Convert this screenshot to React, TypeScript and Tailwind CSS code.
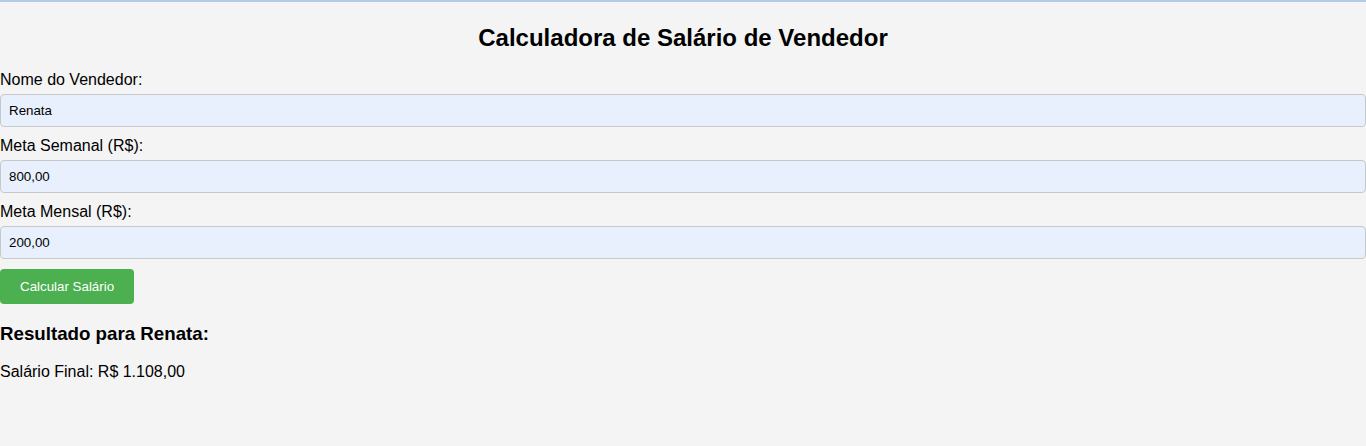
import { useState } from "react";

const font = { fontFamily: '"Liberation Sans", Arial, sans-serif' };

function Field({ id, label, value }: { id: string; label: string; value: string }) {
  return (
    <>
      <label htmlFor={id} className="mb-[5px] block text-[16px] leading-[18px] text-black">
        {label}
      </label>
      <input
        id={id}
        defaultValue={value}
        className="mb-[10px] block h-[33px] w-full rounded-[4px] border border-[#c8c8c8] bg-[#e8f0fe] px-[8px] text-[13.33px] text-black outline-none"
      />
    </>
  );
}

export default function App() {
  const [nome] = useState("Renata");

  return (
    <div className="min-h-[446px] bg-[#f4f4f4]" style={font}>
      <div className="h-[2px] bg-[#b5c9ea]" />
      <div className="pt-[22px]">
        <h2 className="mb-[20px] text-center text-[24px] font-bold leading-[27px] text-black">
          Calculadora de Salário de Vendedor
        </h2>
        <form onSubmit={(e) => e.preventDefault()}>
          <Field id="nome" label="Nome do Vendedor:" value={nome} />
          <Field id="semanal" label="Meta Semanal (R$):" value="800,00" />
          <Field id="mensal" label="Meta Mensal (R$):" value="200,00" />
          <button
            type="submit"
            className="h-[35px] rounded-[4px] bg-[#4caf50] px-[20px] text-[13.33px] font-medium text-white"
          >
            Calcular Salário
          </button>
        </form>
        <h3 className="mt-[19px] text-[18.72px] font-bold leading-[21px] text-black">
          Resultado para {nome}:
        </h3>
        <p className="mt-[19px] text-[16px] leading-[18px] text-black">Salário Final: R$ 1.108,00</p>
      </div>
    </div>
  );
}
